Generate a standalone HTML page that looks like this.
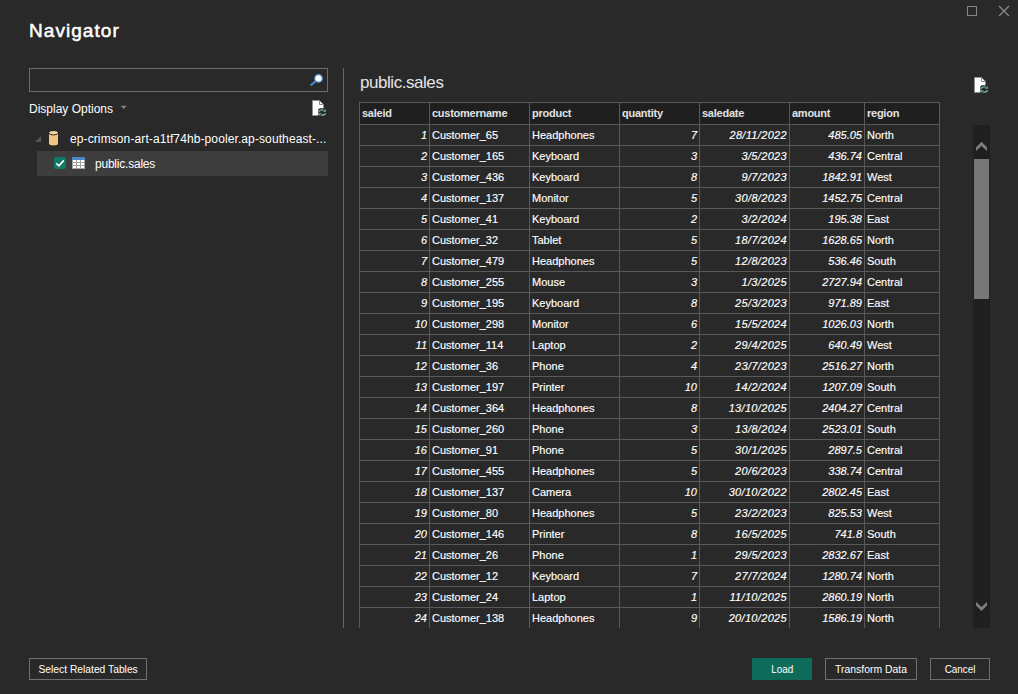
<!DOCTYPE html>
<html lang="en">
<head>
<meta charset="utf-8">
<title>Navigator</title>
<style>
*{box-sizing:border-box;margin:0;padding:0}
html,body{width:1018px;height:694px;overflow:hidden;background:#292929}
body{font-family:"Liberation Sans",sans-serif;color:#fff;font-size:11px;position:relative}
.abs{position:absolute}
.title{left:29px;top:18px;font-size:19px;font-weight:normal;line-height:26px;white-space:nowrap;letter-spacing:1.05px;-webkit-text-stroke:0.5px #fff}
.search{left:29px;top:68px;width:299px;height:24px;border:1px solid #6d6d6d;background:#292929}
.divider{left:343px;top:68px;width:1px;height:560px;background:#676767}
.dopt{left:29px;top:101px;line-height:16px;white-space:nowrap;font-size:12px}
.tree1{left:70px;top:131px;line-height:16px;white-space:nowrap;font-size:12px;letter-spacing:0.105px}
.sel{left:37px;top:151px;width:291px;height:25px;background:#3d3d3d}
.tree2{left:95px;top:156px;line-height:16px;white-space:nowrap;font-size:12px;letter-spacing:-0.22px}
.ptitle{left:360px;top:71px;font-size:17px;line-height:24px;white-space:nowrap;color:#e4e4e4;letter-spacing:-0.45px}
.gridwrap{left:359px;top:102px;width:582px;height:526px;overflow:hidden}
table.grid{border-collapse:collapse;table-layout:fixed;width:580px;font-size:11px}
table.grid th,table.grid td{border:1px solid #595959;height:21px;padding:0 2px;white-space:nowrap;overflow:hidden;line-height:20px}
table.grid th{background:#1f1f1f;text-align:left;font-weight:bold;height:22px;color:#e2e2e2;letter-spacing:-0.25px}
table.grid th span{position:relative;top:-1px}
table.grid td:nth-child(5){letter-spacing:0.33px}
table.grid td{-webkit-text-stroke:0.15px #fff}
table.grid td.n{text-align:right;font-style:italic}
table.grid td.t{text-align:left}
.c0{width:70px}.c1{width:100px}.c2{width:90px}.c3{width:80px}.c4{width:90px}.c5{width:75px}.c6{width:75px}
.btn{top:658px;height:22px;border:1px solid #707070;text-align:center;line-height:20px;white-space:nowrap}
.btn span{display:inline-block;transform-origin:50% 50%}
.b1{left:29px;width:118px}
.b2{left:752px;width:60px;background:#0f6b59;border-color:#0f6b59}
.b3{left:825px;width:92px}
.b4{left:930px;width:60px}
.sb{left:973px;top:125px;width:17px;height:503px;background:#1f1f1f}
.thumb{left:974px;top:159px;width:15px;height:140px;background:#777777}
</style>
</head>
<body>
<div class="abs title">Navigator</div>
<svg class="abs" style="left:960px;top:0" width="58" height="24" viewBox="0 0 58 24"><rect x="7.5" y="6.5" width="9" height="9" fill="none" stroke="#858585" stroke-width="1"/><path d="M39 6 L49 16 M49 6 L39 16" stroke="#8c8c8c" stroke-width="1.2" fill="none"/></svg>
<div class="abs search"></div>
<svg class="abs" style="left:308px;top:72px" width="18" height="16" viewBox="0 0 18 16"><line x1="3.3" y1="12.9" x2="7.6" y2="9.3" stroke="#4181c2" stroke-width="2.3" stroke-linecap="round"/><circle cx="10.5" cy="6.4" r="3.8" fill="#ffffff" stroke="#4c8aca" stroke-width="1.3"/></svg>
<div class="abs dopt">Display Options</div>
<svg class="abs" style="left:120px;top:105px" width="8" height="5" viewBox="0 0 8 5"><path d="M0.8 0.8 H6.8 L3.8 4 Z" fill="#858585"/></svg>
<svg class="abs ficon" style="left:311px;top:99px" width="17" height="18" viewBox="0 0 17 18"><path d="M1.5 1.5 H8.5 L12.5 5.5 V16.5 H1.5 Z" fill="#ffffff" stroke="#8e8e8e" stroke-width="1"/><path d="M8.5 1.5 V5.5 H12.5" fill="none" stroke="#8e8e8e" stroke-width="1"/><path d="M7.3 10.6 L8.6 9.3 H16.2 V17.8 H7.3 Z" fill="#292929"/><g transform="translate(-0.5,0)"><path d="M8.4 12.5 Q10.2 10.3 13.4 11" fill="none" stroke="#6cbfa2" stroke-width="1.2"/><path d="M15.3 9.9 V12.7 H12.5 Z" fill="#6cbfa2"/><path d="M15.2 14.5 Q13.4 16.7 10.2 16" fill="none" stroke="#6cbfa2" stroke-width="1.2"/><path d="M8.3 17.1 V14.3 H11.1 Z" fill="#6cbfa2"/></g></svg>
<svg class="abs" style="left:35px;top:136px" width="6" height="6" viewBox="0 0 6 6"><path d="M6 0 V6 H0 Z" fill="#555555"/></svg>
<svg class="abs" style="left:48px;top:130px" width="11" height="16" viewBox="0 0 11 16"><path d="M1 3 V13.6 A4.5 1.9 0 0 0 10 13.6 V3 Z" fill="#efc583"/><ellipse cx="5.5" cy="2.9" rx="4.5" ry="2" fill="#f5d69c"/><path d="M1 3 A4.5 1.9 0 0 0 10 3" fill="none" stroke="#2f2718" stroke-width="1"/></svg>
<div class="abs tree1">ep-crimson-art-a1tf74hb-pooler.ap-southeast-...</div>
<div class="abs sel"></div>
<svg class="abs" style="left:54px;top:157px" width="12" height="12" viewBox="0 0 12 12"><rect x="0" y="0" width="12" height="12" rx="1.8" fill="#117865"/><path d="M2.3 6.3 L4.9 8.8 L9.8 3.4" fill="none" stroke="#ffffff" stroke-width="1.6"/></svg>
<svg class="abs" style="left:72px;top:157px" width="13" height="12" viewBox="0 0 13 12"><rect x="0" y="0" width="13" height="12" fill="#a3a3a3"/><rect x="0" y="0" width="13" height="3" fill="#4a86c8"/><g fill="#ffffff"><rect x="1" y="3" width="3" height="2"/><rect x="5" y="3" width="3" height="2"/><rect x="9" y="3" width="3" height="2"/><rect x="1" y="6" width="3" height="2"/><rect x="5" y="6" width="3" height="2"/><rect x="9" y="6" width="3" height="2"/><rect x="1" y="9" width="3" height="2"/><rect x="5" y="9" width="3" height="2"/><rect x="9" y="9" width="3" height="2"/></g></svg>
<div class="abs tree2">public.sales</div>
<div class="abs divider"></div>
<div class="abs ptitle">public.sales</div>
<svg class="abs ficon" style="left:973px;top:76px" width="17" height="18" viewBox="0 0 17 18"><path d="M1.5 1.5 H8.5 L12.5 5.5 V16.5 H1.5 Z" fill="#ffffff" stroke="#8e8e8e" stroke-width="1"/><path d="M8.5 1.5 V5.5 H12.5" fill="none" stroke="#8e8e8e" stroke-width="1"/><path d="M7.3 10.6 L8.6 9.3 H16.2 V17.8 H7.3 Z" fill="#292929"/><g transform="translate(-0.5,0)"><path d="M8.4 12.5 Q10.2 10.3 13.4 11" fill="none" stroke="#6cbfa2" stroke-width="1.2"/><path d="M15.3 9.9 V12.7 H12.5 Z" fill="#6cbfa2"/><path d="M15.2 14.5 Q13.4 16.7 10.2 16" fill="none" stroke="#6cbfa2" stroke-width="1.2"/><path d="M8.3 17.1 V14.3 H11.1 Z" fill="#6cbfa2"/></g></svg>
<div class="abs gridwrap">
<table class="grid">
<colgroup><col class="c0"><col class="c1"><col class="c2"><col class="c3"><col class="c4"><col class="c5"><col class="c6"></colgroup>
<thead><tr><th><span>saleid</span></th><th><span>customername</span></th><th><span>product</span></th><th><span>quantity</span></th><th><span>saledate</span></th><th><span>amount</span></th><th><span>region</span></th></tr></thead>
<tbody>
<tr><td class="n"><span>1</span></td><td class="t"><span>Customer_65</span></td><td class="t"><span>Headphones</span></td><td class="n"><span>7</span></td><td class="n"><span>28/11/2022</span></td><td class="n"><span>485.05</span></td><td class="t"><span>North</span></td></tr>
<tr><td class="n"><span>2</span></td><td class="t"><span>Customer_165</span></td><td class="t"><span>Keyboard</span></td><td class="n"><span>3</span></td><td class="n"><span>3/5/2023</span></td><td class="n"><span>436.74</span></td><td class="t"><span>Central</span></td></tr>
<tr><td class="n"><span>3</span></td><td class="t"><span>Customer_436</span></td><td class="t"><span>Keyboard</span></td><td class="n"><span>8</span></td><td class="n"><span>9/7/2023</span></td><td class="n"><span>1842.91</span></td><td class="t"><span>West</span></td></tr>
<tr><td class="n"><span>4</span></td><td class="t"><span>Customer_137</span></td><td class="t"><span>Monitor</span></td><td class="n"><span>5</span></td><td class="n"><span>30/8/2023</span></td><td class="n"><span>1452.75</span></td><td class="t"><span>Central</span></td></tr>
<tr><td class="n"><span>5</span></td><td class="t"><span>Customer_41</span></td><td class="t"><span>Keyboard</span></td><td class="n"><span>2</span></td><td class="n"><span>3/2/2024</span></td><td class="n"><span>195.38</span></td><td class="t"><span>East</span></td></tr>
<tr><td class="n"><span>6</span></td><td class="t"><span>Customer_32</span></td><td class="t"><span>Tablet</span></td><td class="n"><span>5</span></td><td class="n"><span>18/7/2024</span></td><td class="n"><span>1628.65</span></td><td class="t"><span>North</span></td></tr>
<tr><td class="n"><span>7</span></td><td class="t"><span>Customer_479</span></td><td class="t"><span>Headphones</span></td><td class="n"><span>5</span></td><td class="n"><span>12/8/2023</span></td><td class="n"><span>536.46</span></td><td class="t"><span>South</span></td></tr>
<tr><td class="n"><span>8</span></td><td class="t"><span>Customer_255</span></td><td class="t"><span>Mouse</span></td><td class="n"><span>3</span></td><td class="n"><span>1/3/2025</span></td><td class="n"><span>2727.94</span></td><td class="t"><span>Central</span></td></tr>
<tr><td class="n"><span>9</span></td><td class="t"><span>Customer_195</span></td><td class="t"><span>Keyboard</span></td><td class="n"><span>8</span></td><td class="n"><span>25/3/2023</span></td><td class="n"><span>971.89</span></td><td class="t"><span>East</span></td></tr>
<tr><td class="n"><span>10</span></td><td class="t"><span>Customer_298</span></td><td class="t"><span>Monitor</span></td><td class="n"><span>6</span></td><td class="n"><span>15/5/2024</span></td><td class="n"><span>1026.03</span></td><td class="t"><span>North</span></td></tr>
<tr><td class="n"><span>11</span></td><td class="t"><span>Customer_114</span></td><td class="t"><span>Laptop</span></td><td class="n"><span>2</span></td><td class="n"><span>29/4/2025</span></td><td class="n"><span>640.49</span></td><td class="t"><span>West</span></td></tr>
<tr><td class="n"><span>12</span></td><td class="t"><span>Customer_36</span></td><td class="t"><span>Phone</span></td><td class="n"><span>4</span></td><td class="n"><span>23/7/2023</span></td><td class="n"><span>2516.27</span></td><td class="t"><span>North</span></td></tr>
<tr><td class="n"><span>13</span></td><td class="t"><span>Customer_197</span></td><td class="t"><span>Printer</span></td><td class="n"><span>10</span></td><td class="n"><span>14/2/2024</span></td><td class="n"><span>1207.09</span></td><td class="t"><span>South</span></td></tr>
<tr><td class="n"><span>14</span></td><td class="t"><span>Customer_364</span></td><td class="t"><span>Headphones</span></td><td class="n"><span>8</span></td><td class="n"><span>13/10/2025</span></td><td class="n"><span>2404.27</span></td><td class="t"><span>Central</span></td></tr>
<tr><td class="n"><span>15</span></td><td class="t"><span>Customer_260</span></td><td class="t"><span>Phone</span></td><td class="n"><span>3</span></td><td class="n"><span>13/8/2024</span></td><td class="n"><span>2523.01</span></td><td class="t"><span>South</span></td></tr>
<tr><td class="n"><span>16</span></td><td class="t"><span>Customer_91</span></td><td class="t"><span>Phone</span></td><td class="n"><span>5</span></td><td class="n"><span>30/1/2025</span></td><td class="n"><span>2897.5</span></td><td class="t"><span>Central</span></td></tr>
<tr><td class="n"><span>17</span></td><td class="t"><span>Customer_455</span></td><td class="t"><span>Headphones</span></td><td class="n"><span>5</span></td><td class="n"><span>20/6/2023</span></td><td class="n"><span>338.74</span></td><td class="t"><span>Central</span></td></tr>
<tr><td class="n"><span>18</span></td><td class="t"><span>Customer_137</span></td><td class="t"><span>Camera</span></td><td class="n"><span>10</span></td><td class="n"><span>30/10/2022</span></td><td class="n"><span>2802.45</span></td><td class="t"><span>East</span></td></tr>
<tr><td class="n"><span>19</span></td><td class="t"><span>Customer_80</span></td><td class="t"><span>Headphones</span></td><td class="n"><span>5</span></td><td class="n"><span>23/2/2023</span></td><td class="n"><span>825.53</span></td><td class="t"><span>West</span></td></tr>
<tr><td class="n"><span>20</span></td><td class="t"><span>Customer_146</span></td><td class="t"><span>Printer</span></td><td class="n"><span>8</span></td><td class="n"><span>16/5/2025</span></td><td class="n"><span>741.8</span></td><td class="t"><span>South</span></td></tr>
<tr><td class="n"><span>21</span></td><td class="t"><span>Customer_26</span></td><td class="t"><span>Phone</span></td><td class="n"><span>1</span></td><td class="n"><span>29/5/2023</span></td><td class="n"><span>2832.67</span></td><td class="t"><span>East</span></td></tr>
<tr><td class="n"><span>22</span></td><td class="t"><span>Customer_12</span></td><td class="t"><span>Keyboard</span></td><td class="n"><span>7</span></td><td class="n"><span>27/7/2024</span></td><td class="n"><span>1280.74</span></td><td class="t"><span>North</span></td></tr>
<tr><td class="n"><span>23</span></td><td class="t"><span>Customer_24</span></td><td class="t"><span>Laptop</span></td><td class="n"><span>1</span></td><td class="n"><span>11/10/2025</span></td><td class="n"><span>2860.19</span></td><td class="t"><span>North</span></td></tr>
<tr><td class="n"><span>24</span></td><td class="t"><span>Customer_138</span></td><td class="t"><span>Headphones</span></td><td class="n"><span>9</span></td><td class="n"><span>20/10/2025</span></td><td class="n"><span>1586.19</span></td><td class="t"><span>North</span></td></tr>
</tbody></table>
</div>
<div class="abs sb"></div>
<svg class="abs" style="left:973px;top:140px" width="17" height="12" viewBox="0 0 17 12"><path d="M3 7.2 L8.5 1.8 L14 7.2 V11 L8.5 6 L3 11 Z" fill="#7d7d7d"/></svg>
<div class="abs thumb"></div>
<svg class="abs" style="left:973px;top:600px" width="17" height="12" viewBox="0 0 17 12"><path d="M3 1.8 L8.5 7 L14 1.8 V5.6 L8.5 11.1 L3 5.6 Z" fill="#7d7d7d"/></svg>
<div class="abs btn b1"><span style="transform:scaleX(0.935)">Select Related Tables</span></div>
<div class="abs btn b2"><span style="transform:scaleX(0.9)">Load</span></div>
<div class="abs btn b3"><span style="transform:scaleX(0.945)">Transform Data</span></div>
<div class="abs btn b4"><span style="transform:scaleX(0.9)">Cancel</span></div>
</body>
</html>
